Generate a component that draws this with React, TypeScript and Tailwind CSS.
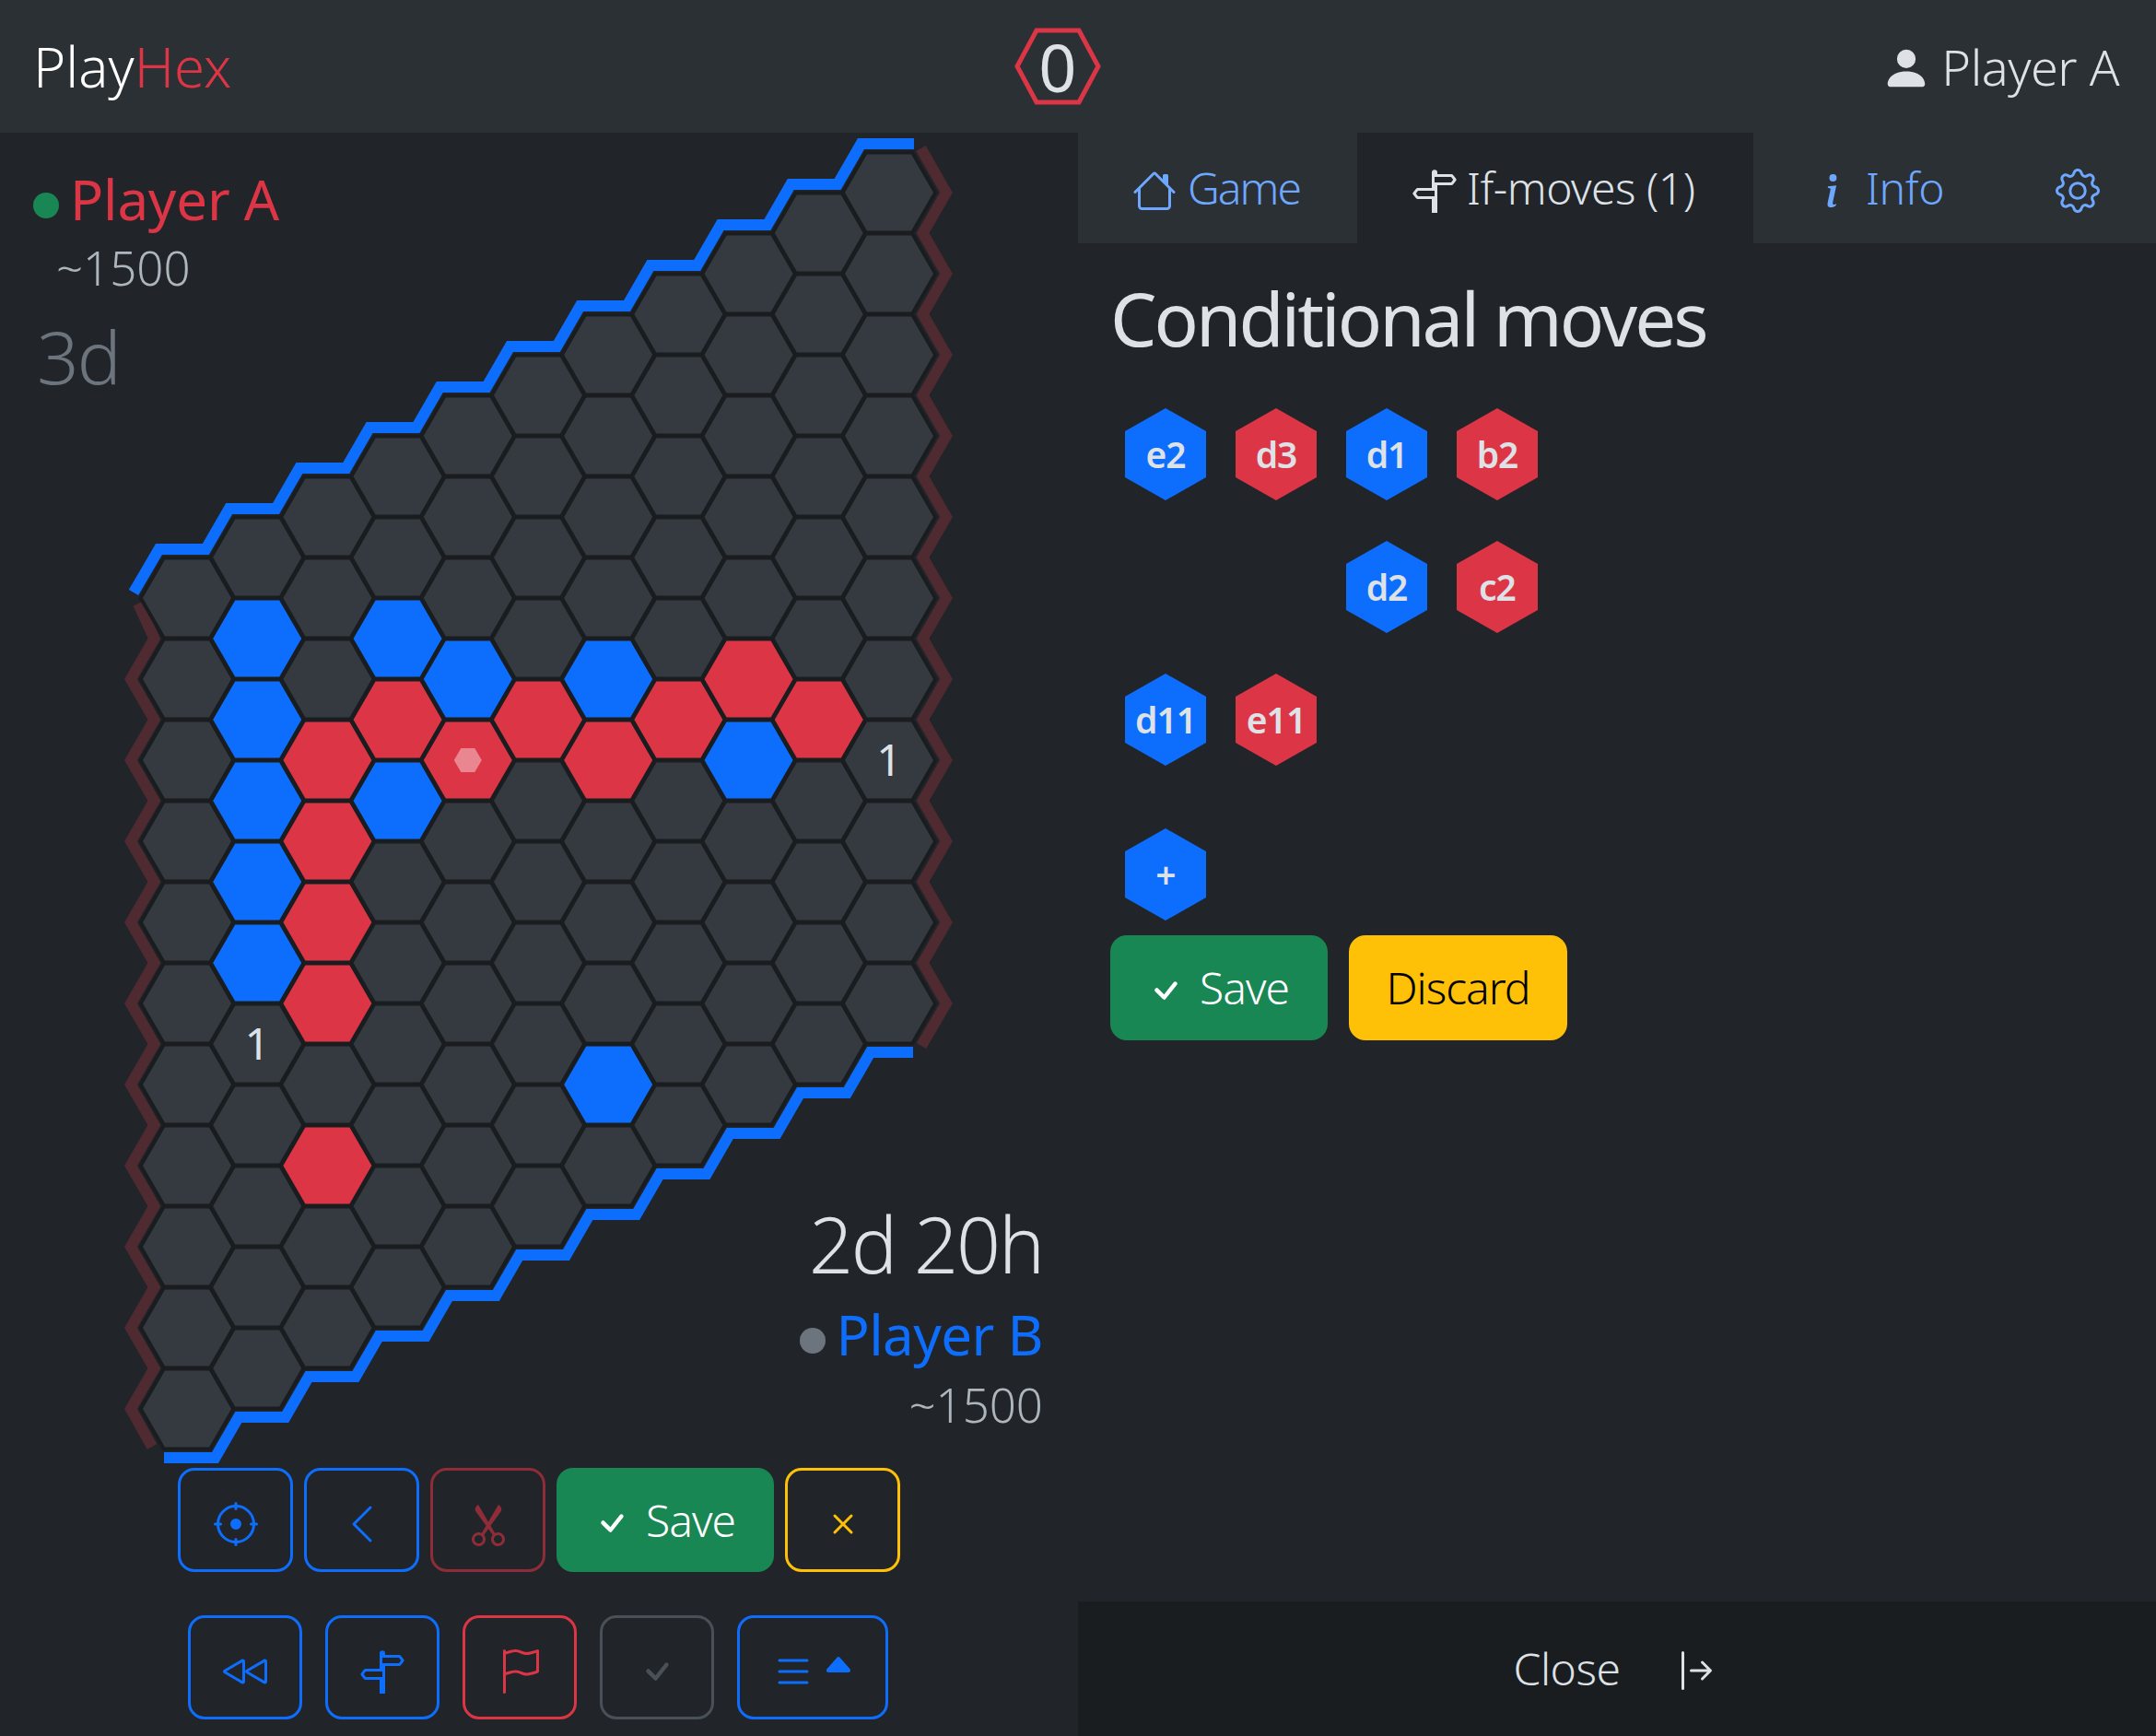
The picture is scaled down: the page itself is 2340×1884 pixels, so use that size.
import {
  BsArrowBarRight,
  BsCaretUpFill,
  BsCheck,
  BsChevronLeft,
  BsCrosshair,
  BsFlag,
  BsGear,
  BsHouse,
  BsInfoLg,
  BsList,
  BsPersonFill,
  BsRewind,
  BsScissors,
  BsSignpostSplit,
  BsX,
} from "react-icons/bs";

const S = 50.8;
const H = 44;
const OUT = 61;
const OUT_H = 53;

const BLUE = [[1, 1], [1, 2], [1, 3], [1, 4], [1, 5], [3, 2], [4, 3], [6, 4], [8, 6], [3, 4], [6, 9]];
const RED = [[2, 3], [2, 4], [2, 5], [2, 6], [2, 8], [3, 3], [4, 4], [5, 4], [6, 5], [7, 5], [8, 5], [9, 6]];

const cx = (i: number) => 203 + 76.2 * i;
const cy = (i: number, j: number) => 649 - H * i + 2 * H * j;

function hexPoints(x: number, y: number, s: number) {
  const h = (s * Math.sqrt(3)) / 2;
  return [
    [x - s, y],
    [x - s / 2, y - h],
    [x + s / 2, y - h],
    [x + s, y],
    [x + s / 2, y + h],
    [x - s / 2, y + h],
  ]
    .map((p) => p.join(","))
    .join(" ");
}

function cellColor(i: number, j: number) {
  if (BLUE.some((c) => c[0] === i && c[1] === j)) return "#0d6efd";
  if (RED.some((c) => c[0] === i && c[1] === j)) return "#dc3545";
  return "#343a40";
}

function blueTop() {
  const pts: number[][] = [[145, 643]];
  for (let i = 0; i <= 10; i++) {
    const x = cx(i) - OUT / 2;
    const y = cy(i, 0) - OUT_H;
    pts.push([x, y]);
    pts.push([i === 10 ? 992 : cx(i + 1) - OUT / 2 - 25.4, y]);
  }
  return pts.map((p) => p.join(",")).join(" ");
}

function blueBottom() {
  const pts: number[][] = [[178, cy(0, 10) + OUT_H]];
  for (let i = 0; i <= 10; i++) {
    const y = cy(i, 10) + OUT_H;
    if (i > 0) pts.push([cx(i - 1) + OUT / 2 + 25.4, y]);
    pts.push([i === 10 ? 991 : cx(i) + OUT / 2, y]);
  }
  return pts.map((p) => p.join(",")).join(" ");
}

function redLeft() {
  const pts: number[][] = [[150, 655]];
  for (let j = 0; j <= 9; j++) {
    pts.push([167.4, cy(0, j) + H]);
    pts.push([142, cy(0, j + 1)]);
  }
  pts.push([165, cy(0, 10) + 41]);
  return pts.map((p) => p.join(",")).join(" ");
}

function redRight() {
  const pts: number[][] = [[999.5, 161]];
  for (let j = 0; j <= 10; j++) {
    pts.push([1027, cy(10, j)]);
    pts.push(j === 10 ? [1000, cy(10, j) + 46] : [1001.6, cy(10, j) + H]);
  }
  return pts.map((p) => p.join(",")).join(" ");
}

function Board() {
  const cells = [];
  for (let i = 0; i <= 10; i++) {
    for (let j = 0; j <= 10; j++) {
      cells.push(
        <polygon
          key={`${i}-${j}`}
          points={hexPoints(cx(i), cy(i, j), S - 0.5)}
          fill={cellColor(i, j)}
          stroke="#1a1d20"
          strokeWidth="4"
        />,
      );
    }
  }
  return (
    <svg className="absolute inset-0 w-[1170px] h-[1449px]" viewBox="0 144 1170 1449" fill="none">
      <polyline points={redLeft()} stroke="#4f2a31" strokeWidth="12" />
      <polyline points={redRight()} stroke="#4f2a31" strokeWidth="12" />
      <polyline points={blueTop()} stroke="#0d6efd" strokeWidth="12" />
      <polyline points={blueBottom()} stroke="#0d6efd" strokeWidth="12" />
      {cells}
      <polygon points={hexPoints(cx(4), cy(4, 4), 15)} fill="#ea868f" />
      <text x={cx(1)} y={cy(1, 6) + 17} textAnchor="middle" fontSize="48" fill="#dee2e6" fontFamily="Noto Sans, sans-serif" fontWeight="400">
        1
      </text>
      <text x={cx(10)} y={cy(10, 7) + 17} textAnchor="middle" fontSize="48" fill="#dee2e6" fontFamily="Noto Sans, sans-serif" fontWeight="400">
        1
      </text>
    </svg>
  );
}

function OutlineBtn({ color, w = "w-[124px]", children }: { color: string; w?: string; children: React.ReactNode }) {
  return (
    <button className={`${w} h-[113px] flex items-center justify-center rounded-[18px] border-[3px] ${color}`}>
      {children}
    </button>
  );
}

function MoveHex({ label, color }: { label: string; color: string }) {
  return (
    <div
      className={`w-[88px] h-[100px] flex items-center justify-center text-[39px] font-semibold tracking-[-1px] text-[#dee2e6] [clip-path:polygon(50%_0,100%_25%,100%_75%,50%_100%,0_75%,0_25%)] ${color}`}
    >
      {label}
    </div>
  );
}

const blue = "bg-[#0d6efd]";
const red = "bg-[#dc3545]";
const btnIcon = "w-[48px] h-[48px] mt-[8px]";
const tabIcon = "w-[48px] h-[48px] mt-[5px]";

function SaveButton({ h }: { h: string }) {
  return (
    <button className={`w-[236px] ${h} flex items-center justify-center gap-[13px] pr-[6px] rounded-[18px] bg-[#198754] text-white text-[48px] tracking-[-1px]`}>
      <BsCheck className="w-[48px] h-[48px] mt-[6px]" />
      Save
    </button>
  );
}

export default function App() {
  return (
    <div className="w-[2340px] h-[1884px] flex flex-col overflow-hidden bg-[#212529] font-['Noto_Sans',sans-serif] font-light text-[#dee2e6]">
      {/* Header */}
      <header className="h-[144px] flex-none flex items-center justify-between pl-[36px] pr-[40px] bg-[#2b3035]">
        <div className="text-[60px] text-white">
          Play<span className="text-[#dc3545]">Hex</span>
        </div>
        <div className="relative w-[94px] h-[84px] ml-[2px] flex items-center justify-center">
          <svg className="absolute inset-0" viewBox="0 0 94 84" fill="none">
            <polygon points="3,42 24,3 70,3 91,42 70,81 24,81" stroke="#dc3545" strokeWidth="5" />
          </svg>
          <span className="relative text-[72px] leading-none font-normal">0</span>
        </div>
        <div className="flex items-center gap-[11px] text-[54px] tracking-[-0.5px]">
          <BsPersonFill className="w-[54px] h-[54px] mt-[3px] text-[#dee2e6]" />
          Player A
        </div>
      </header>

      <div className="flex-1 flex min-h-0">
        {/* Board side */}
        <div className="w-[1170px] flex-none flex flex-col">
          <div className="relative h-[1449px] flex-none flex flex-col justify-between">
            <Board />
            <div className="relative pl-[36px] pt-[30px]">
              <div className="flex items-center gap-[12px] text-[60px] leading-[84px] text-[#dc3545] font-normal tracking-[-0.2px]">
                <span className="w-[28px] h-[28px] rounded-full bg-[#198754] mt-[14px]" />
                Player A
              </div>
              <div className="pl-[25px] text-[51px] leading-[64px] text-[#adb5bd]">~1500</div>
              <div className="pl-[4px] pt-[14px] text-[80px] leading-[100px] text-[#6c757d] tracking-[-2px]">3d</div>
            </div>
            <div className="relative pr-[38px] pb-[37px] flex flex-col items-end">
              <div className="text-[84px] leading-[100px] tracking-[-2px] mb-[6px]">2d 20h</div>
              <div className="flex items-center gap-[12px] text-[60px] leading-[84px] text-[#0d6efd] font-normal mb-[2px] tracking-[-0.6px]">
                <span className="w-[28px] h-[28px] rounded-full bg-[#6c757d] mt-[14px]" />
                Player B
              </div>
              <div className="text-[51px] leading-[64px] text-[#adb5bd]">~1500</div>
            </div>
          </div>
          <div className="h-[113px] flex-none flex items-center justify-center gap-[12px]">
            <OutlineBtn w="w-[125px]" color="border-[#0d6efd] text-[#0d6efd]">
              <BsCrosshair className={btnIcon} />
            </OutlineBtn>
            <OutlineBtn w="w-[125px]" color="border-[#0d6efd] text-[#0d6efd]">
              <BsChevronLeft className={btnIcon} />
            </OutlineBtn>
            <OutlineBtn w="w-[125px]" color="border-[#8e2d38] text-[#8e2d38]">
              <BsScissors className={btnIcon} />
            </OutlineBtn>
            <SaveButton h="h-[113px]" />
            <OutlineBtn w="w-[125px]" color="border-[#ffc107] text-[#ffc107]">
              <BsX className={btnIcon} />
            </OutlineBtn>
          </div>
          <div className="h-[113px] mt-[47px] pr-[2px] flex-none flex items-center justify-center gap-[25px]">
            <OutlineBtn color="border-[#0d6efd] text-[#0d6efd]">
              <BsRewind className={btnIcon} />
            </OutlineBtn>
            <OutlineBtn color="border-[#0d6efd] text-[#0d6efd]">
              <BsSignpostSplit className={btnIcon} />
            </OutlineBtn>
            <OutlineBtn color="border-[#dc3545] text-[#dc3545]">
              <BsFlag className={btnIcon} />
            </OutlineBtn>
            <OutlineBtn color="border-[#495057] text-[#495057]">
              <BsCheck className={btnIcon} />
            </OutlineBtn>
            <OutlineBtn color="border-[#0d6efd] text-[#0d6efd]" w="w-[164px]">
              <BsList className={btnIcon} />
              <BsCaretUpFill className="w-[36px] h-[36px] ml-[7px] mb-[8px]" />
            </OutlineBtn>
          </div>
        </div>

        {/* Side panel */}
        <div className="w-[1170px] flex-none flex flex-col">
          <nav className="h-[120px] flex-none flex items-center bg-[#2b3035] text-[48px] text-[#6ea8fe]">
            <div className="w-[303px] flex items-center gap-[12px] pl-[59px] tracking-[-2px]">
              <BsHouse className={tabIcon} />
              Game
            </div>
            <div className="w-[430px] h-full flex items-center gap-[11px] pl-[60px] bg-[#212529] text-[#dee2e6] tracking-[-0.5px]">
              <BsSignpostSplit className={tabIcon} />
              If-moves (1)
            </div>
            <div className="flex items-center gap-[13px] pl-[61px] tracking-[-0.4px]">
              <BsInfoLg className={tabIcon} />
              Info
            </div>
            <div className="flex items-center ml-[121px]">
              <BsGear className={tabIcon} />
            </div>
          </nav>
          <div className="flex-1 pl-[35px] pt-[33px]">
            <h3 className="text-[80px] leading-[96px] font-normal tracking-[-3px] text-[#dee2e6]">Conditional moves</h3>
            <div className="pl-[16px] pt-[50px]">
              <div className="h-[144px] flex gap-[32px]">
                <MoveHex label="e2" color={blue} />
                <MoveHex label="d3" color={red} />
                <MoveHex label="d1" color={blue} />
                <MoveHex label="b2" color={red} />
              </div>
              <div className="h-[144px] flex gap-[32px] pl-[240px]">
                <MoveHex label="d2" color={blue} />
                <MoveHex label="c2" color={red} />
              </div>
              <div className="h-[168px] flex gap-[32px]">
                <MoveHex label="d11" color={blue} />
                <MoveHex label="e11" color={red} />
              </div>
              <div className="h-[116px]">
                <MoveHex label="+" color={blue} />
              </div>
            </div>
            <div className="flex gap-[23px]">
              <SaveButton h="h-[114px]" />
              <button className="w-[237px] h-[114px] flex items-center justify-center rounded-[18px] bg-[#ffc107] text-black text-[48px] tracking-[-1px]">
                Discard
              </button>
            </div>
          </div>
          <div className="h-[146px] flex-none flex items-center justify-center gap-[58px] pr-[3px] bg-[#1a1d20] text-[48px] tracking-[-0.5px]">
            Close
            <BsArrowBarRight className="w-[48px] h-[48px] mt-[4px]" />
          </div>
        </div>
      </div>
    </div>
  );
}
